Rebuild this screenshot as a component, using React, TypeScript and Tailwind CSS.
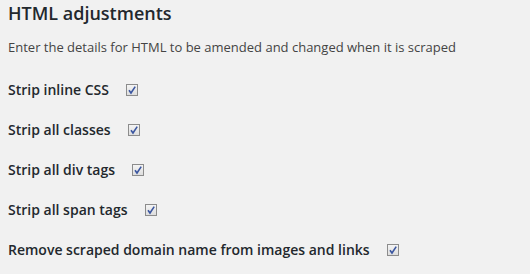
const options = [
  "Strip inline CSS",
  "Strip all classes",
  "Strip all div tags",
  "Strip all span tags",
  "Remove scraped domain name from images and links",
];

function Check() {
  return (
    <span className="inline-flex w-[12px] h-[12px] border border-[#8c8c8c] bg-gradient-to-b from-[#f4f4f4] to-[#dedede] items-center justify-center">
      <svg width="10" height="10" viewBox="0 0 10 10">
        <path d="M2 5.2 L4 8 L8.2 1.6" fill="none" stroke="#3b56a0" strokeWidth="1.6" />
      </svg>
    </span>
  );
}

export default function App() {
  return (
    <div className="w-[530px] h-[274px] bg-[#f1f1f1] pl-2 pt-px font-['Open_Sans',sans-serif] overflow-hidden">
      <h2 className="text-[18px] leading-[24px] font-semibold text-[#23282d]">HTML adjustments</h2>
      <p className="mt-3 text-[13px] leading-5 text-[#444]">
        Enter the details for HTML to be amended and changed when it is scraped
      </p>
      <div className="mt-[23px] flex flex-col gap-5">
        {options.map((o) => (
          <div key={o} className="flex items-center h-5 gap-[17px]">
            <span className="text-[14px] leading-5 font-semibold text-[#23282d]">{o}</span>
            <Check />
          </div>
        ))}
      </div>
    </div>
  );
}
